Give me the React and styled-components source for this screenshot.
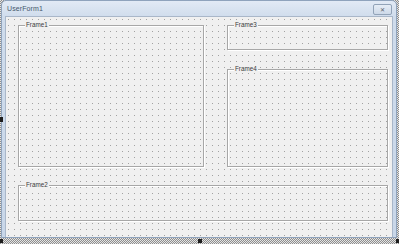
import React from 'react';
import styled, { createGlobalStyle } from 'styled-components';

const GlobalStyle = createGlobalStyle`
  html, body {
    margin: 0;
    padding: 0;
    background: #ffffff;
  }
  body {
    font-family: "Liberation Sans", Arial, sans-serif;
  }
`;

const Stage = styled.div`
  position: relative;
  width: 399px;
  height: 244px;
  box-sizing: border-box;
  padding: 0 2px 6px 1px;
  background:
    conic-gradient(#8e8e8e 25%, #e4e4e4 0 50%, #8e8e8e 0 75%, #e4e4e4 0) 0 0 / 2px 2px;
`;

// selection grab handles drawn over the hatched border
const Handle = styled.div`
  position: absolute;
  width: ${(p) => p.w}px;
  height: ${(p) => p.h}px;
  background: #1e1e1e;
`;

const Window = styled.div`
  width: 396px;
  height: 238px;
  box-sizing: border-box;
  display: flex;
  flex-direction: column;
  padding: 0 3px 0 3px;
  border: 1px solid #8fa3bc;
  border-radius: 5px 5px 0 0;
  background: linear-gradient(to bottom, #e2eaf5 0, #cfdcec 16px, #c9d7e9 100%);
`;

const TitleBar = styled.div`
  height: 15px;
  flex: none;
  display: flex;
  align-items: center;
  justify-content: space-between;
  padding: 0 1px 0 2px;
`;

const Title = styled.span`
  font-size: 7px;
  color: #46576d;
  letter-spacing: 0.1px;
`;

const CloseButton = styled.div`
  width: 17px;
  height: 9px;
  margin-top: 2px;
  display: flex;
  align-items: center;
  justify-content: center;
  border: 1px solid #92a3b8;
  border-radius: 2px;
  background: linear-gradient(to bottom, #e6edf6, #cdd9e8);
  color: #5a626c;
  font-size: 6px;
  line-height: 1;
`;

const Client = styled.div`
  flex: 1;
  box-sizing: border-box;
  border: 1px solid #a9b7c9;
  border-bottom: none;
  background-color: #f0f0f0;
  background-image: conic-gradient(at 1px 1px, transparent 75%, #a2a2a2 0);
  background-size: 6px 6px;
  background-position: 2px 2px;
  padding: 8px 0 0 12px;
  display: grid;
  grid-template-columns: 186px 23px 161px;
  grid-template-rows: 25px 19px 98px 18px 36px;
`;

const Frame = styled.div`
  position: relative;
  grid-column: ${(p) => p.col};
  grid-row: ${(p) => p.row};
  box-sizing: border-box;
  border: 1px solid #a7a7a7;
  box-shadow: inset 1px 1px 0 #ffffff, 1px 1px 0 #ffffff;
`;

const Caption = styled.span`
  position: absolute;
  top: -5px;
  left: 6px;
  padding: 0 1px;
  background: #f0f0f0;
  font-size: 6.3px;
  line-height: 8px;
  color: #3a3a3a;
`;

const frames = [
  { name: 'Frame1', col: '1', row: '1 / 4' },
  { name: 'Frame3', col: '3', row: '1' },
  { name: 'Frame4', col: '3', row: '3' },
  { name: 'Frame2', col: '1 / 4', row: '5' },
];

const handles = [
  { id: 'ml', w: 3, h: 5, left: 0, top: 117 },
  { id: 'bm', w: 4, h: 4, left: 198, top: 239 },
  { id: 'bl', w: 3, h: 4, left: 0, top: 239 },
  { id: 'br', w: 3, h: 4, left: 396, top: 239 },
];

export default function App() {
  return (
    <>
      <GlobalStyle />
      <Stage>
        <Window>
          <TitleBar>
            <Title>UserForm1</Title>
            <CloseButton>✕</CloseButton>
          </TitleBar>
          <Client>
            {frames.map((f) => (
              <Frame key={f.name} col={f.col} row={f.row}>
                <Caption>{f.name}</Caption>
              </Frame>
            ))}
          </Client>
        </Window>
        {handles.map((h) => (
          <Handle key={h.id} w={h.w} h={h.h} style={{ left: h.left, top: h.top }} />
        ))}
      </Stage>
    </>
  );
}
